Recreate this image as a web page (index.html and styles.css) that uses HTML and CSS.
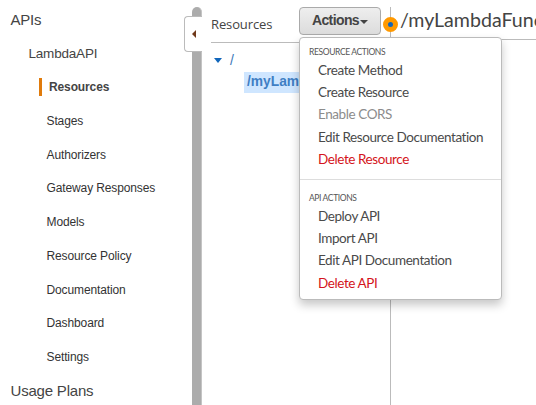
FILE: index.html
```html
<!DOCTYPE html>
<html lang="en">
<head>
<meta charset="utf-8">
<title>LambdaAPI Resources</title>
<link rel="stylesheet" href="styles.css">
</head>
<body>
<div class="app">
  <nav class="sidebar">
    <div class="nav-top"><span>APIs</span></div>
    <div class="nav-api"><span>LambdaAPI</span></div>
    <ul class="nav-list">
      <li class="active"><span>Resources</span></li>
      <li>Stages</li>
      <li>Authorizers</li>
      <li>Gateway Responses</li>
      <li>Models</li>
      <li>Resource Policy</li>
      <li>Documentation</li>
      <li>Dashboard</li>
      <li>Settings</li>
    </ul>
    <div class="nav-top"><span>Usage Plans</span></div>
  </nav>
  <div class="divider">
    <div class="collapse"><svg width="4" height="8" viewBox="0 0 4 8"><path d="M4 0v8L0 4z"/></svg></div>
  </div>
  <section class="tree">
    <header class="tree-head">
      <span class="tree-title">Resources</span>
      <div class="dropdown">
        <button class="actions"><span>Actions</span><i class="caret"></i></button>
        <div class="menu">
          <h6>RESOURCE ACTIONS</h6>
          <ul>
            <li>Create Method</li>
            <li>Create Resource</li>
            <li class="disabled">Enable CORS</li>
            <li>Edit Resource Documentation</li>
            <li class="danger">Delete Resource</li>
          </ul>
          <hr>
          <h6>API ACTIONS</h6>
          <ul>
            <li>Deploy API</li>
            <li>Import API</li>
            <li>Edit API Documentation</li>
            <li class="danger">Delete API</li>
          </ul>
        </div>
      </div>
    </header>
    <div class="root"><i class="twist"></i><span>/</span></div>
    <div class="selected">/myLamb</div>
  </section>
  <main class="detail">
    <span class="dot"></span>
    <h1>/myLambdaFunc</h1>
  </main>
</div>
</body>
</html>
```
FILE: styles.css
```css
* { box-sizing: border-box; }
body { margin: 0; background: #fff; color: #444; font-family: "Liberation Sans", Arial, sans-serif; overflow: hidden; }
ul { list-style: none; margin: 0; padding: 0; }
.app { display: flex; width: 536px; height: 405px; overflow: hidden; }

.sidebar { flex: 0 0 192px; padding-top: 3px; }
.nav-top { height: 34px; line-height: 34px; padding-left: 10.5px; font-size: 15px; letter-spacing: -.2px; }
.nav-api { height: 33px; line-height: 33px; padding-left: 28.5px; font-size: 13.5px; letter-spacing: -.2px; }
.nav-list { padding-top: .4px; }
.nav-list li { height: 33.7px; line-height: 34px; padding-left: 46.5px; font-size: 12px; letter-spacing: -.12px; color: #333; }
.nav-list .active { display: flex; align-items: center; padding-left: 39px; font-weight: bold; color: #444; }
.nav-list .active span { border-left: 3px solid #e07b0c; padding-left: 7px; line-height: 18px; }

.divider { flex: 0 0 10px; margin-top: 7px; background: #acacac; border-right: 1px solid #c4c4c4; border-radius: 5px 5px 0 0; position: relative; }
.collapse { position: absolute; left: -8px; top: 9px; width: 18px; height: 36px; background: #fff; border: 1px solid #bbb; border-right: 0; border-radius: 4px 0 0 4px; display: flex; align-items: center; padding-left: 7px; }
.collapse path { fill: #70391a; }

.tree { flex: 0 0 188px; padding: 7px 0 0 9px; }
.tree-head { height: 36px; display: flex; border-bottom: 1px solid #bbb; font-family: "Open Sans", sans-serif; }
.tree-title { width: 88px; line-height: 34px; font-size: 13px; letter-spacing: -.12px; }
.dropdown { position: relative; z-index: 2; }
.actions { display: flex; align-items: center; justify-content: center; width: 82px; height: 28px; padding: 0 0 2px; border: 1px solid #aaa; border-radius: 4px; background: linear-gradient(#eee, #dcdcdc); color: #444; font: bold 14px "Liberation Sans", Arial, sans-serif; letter-spacing: -.6px; }
.caret { border: 4px solid transparent; border-top-color: #444; border-bottom: 0; margin: 3px 0 0 1px; }

.menu { position: absolute; top: 30px; left: 0; width: 203px; height: 263px; background: #fff; border: 1px solid #bbb; border-radius: 4px; box-shadow: 0 5px 10px rgba(0,0,0,.22); padding-top: 7px; font-family: Lato, sans-serif; color: #4a4a4a; white-space: nowrap; }
.menu h6 { margin: 0; padding-left: 9px; height: 14px; line-height: 14px; font-size: 8.5px; font-weight: normal; letter-spacing: -.38px; color: #555; }
.menu li { height: 22.2px; line-height: 22.2px; padding-left: 18px; font-size: 13.5px; letter-spacing: -.42px; }
.menu .disabled { color: #8c8c8c; }
.menu .danger { color: #d41420; }
.menu hr { margin: 9px 0 11px; border: 0; border-top: 1px solid #ddd; }

.root { display: flex; align-items: center; gap: 8px; height: 34px; padding-left: 3px; font: 14px "Liberation Sans", Arial, sans-serif; color: #3c78b8; }
.twist { border: 4px solid transparent; border-top: 5px solid #1166bb; border-bottom: 0; }
.selected { margin: -5px 0 0 33px; height: 21px; padding-left: 3px; background: #cfe6ff; color: #3f7fc4; font: bold 13.8px/19px "Liberation Sans", Arial, sans-serif; }

.detail { flex: 1; min-width: 0; margin-top: 7px; border-left: 1px solid #bbb; position: relative; }
.detail h1 { margin: 0; height: 33px; padding-left: 9px; border-bottom: 1px solid #bbb; font: 19.6px/25px Lato, sans-serif; color: #444; }
.dot { position: absolute; left: -8px; top: 10px; width: 15px; height: 15px; border-radius: 50%; border: 5px solid #ff9900; background: #1166bb; }
```
